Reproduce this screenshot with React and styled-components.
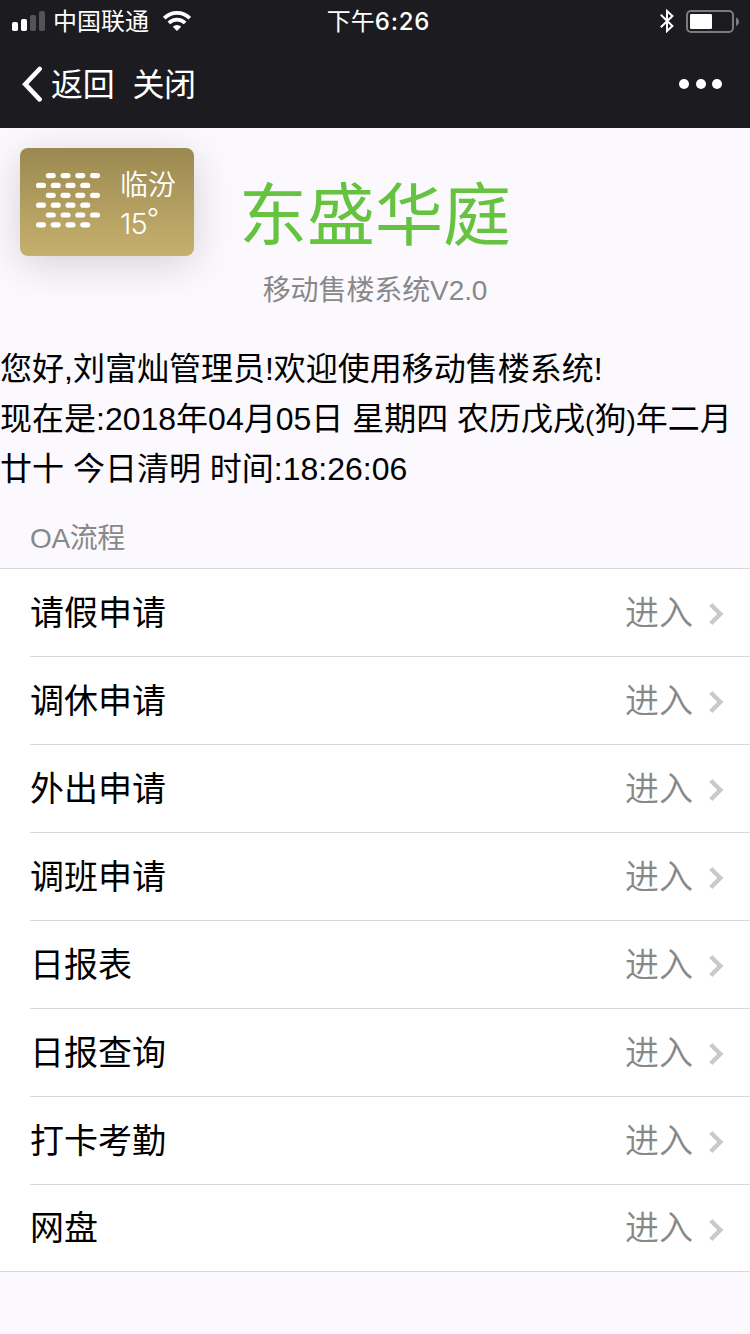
import React from 'react';
import styled, { createGlobalStyle } from 'styled-components';

const GlobalStyle = createGlobalStyle`
  * { box-sizing: border-box; }
  body {
    margin: 0;
    background: #fbf9fe;
    font-family: "Liberation Sans", "Noto Sans CJK SC", sans-serif;
    color: #000;
  }
`;

const Screen = styled.div`
  width: 750px;
  height: 1334px;
  overflow: hidden;
  background: #fbf9fe;
`;

const Header = styled.header`
  height: 128px;
  background: #1c1b20;
  color: #fff;
`;

const StatusBar = styled.div`
  display: grid;
  grid-template-columns: 1fr auto 1fr;
  align-items: center;
  height: 40px;
  padding: 0 11px 0 12px;
`;

const StatusSide = styled.div`
  display: flex;
  align-items: center;
  justify-content: ${({ $end }) => ($end ? 'flex-end' : 'flex-start')};
  gap: ${({ $end }) => ($end ? '12px' : '0')};
  height: 40px;
  svg { display: block; flex: none; }
`;

const Carrier = styled.span`
  margin: 0 14px 2px 7px;
  font: 24px/36px "Noto Sans CJK SC", sans-serif;
`;

const Clock = styled.div`
  display: flex;
  align-items: center;
  margin-left: 6px;
  padding-bottom: 2px;
  font: 24px/36px "Noto Sans CJK SC", sans-serif;
`;

const Digits = styled.span`
  padding-top: 4px;
  font: 500 24px/36px Inter, sans-serif;
  letter-spacing: 0.8px;
`;

const NavBar = styled.nav`
  display: flex;
  align-items: center;
  height: 88px;
  padding: 0 28px 0 21px;
  font: 32px/48px "Noto Sans CJK SC", sans-serif;
  letter-spacing: -0.3px;
  svg { display: block; }
`;

const NavText = styled.span`
  margin: 0 0 4px ${({ $gap }) => $gap}px;
`;

const More = styled.div`
  display: flex;
  gap: 6.5px;
  margin-left: auto;
`;

const Dot = styled.i`
  width: 10px;
  height: 10px;
  border-radius: 50%;
  background: #fff;
`;

const Hero = styled.section`
  position: relative;
  height: 216px;
  padding-top: 33px;
  text-align: center;
`;

const Weather = styled.aside`
  position: absolute;
  left: 20px;
  top: 20px;
  display: flex;
  width: 174px;
  height: 108px;
  padding: 25px 16px 0;
  border-radius: 8px;
  background: linear-gradient(#9b8950, #c6b06e);
  box-shadow: 0 8px 40px rgba(0, 0, 0, 0.16);
  color: #fff;
  text-align: left;
`;

const WeatherText = styled.div`
  margin: -10px 0 0 19px;
  font: 350 28px/40px "Noto Sans CJK SC", sans-serif;
`;

const Temperature = styled.div`
  display: flex;
  padding-top: 1px;
  font: 300 29px/40px Inter, sans-serif;
  letter-spacing: -1px;
`;

const Degree = styled.span`
  margin-top: -5px;
  font-size: 27px;
`;

const Title = styled.h1`
  margin: 0;
  color: #65c33f;
  font: 400 68px/100px "Noto Sans CJK SC", sans-serif;
`;

const Subtitle = styled.p`
  margin: 10px 0 0;
  color: #888;
  font-size: 28px;
  line-height: 40px;
  letter-spacing: -0.1px;
`;

const Greeting = styled.p`
  margin: 0;
  font-size: 32px;
  line-height: 50px;
`;

const Bracket = styled.span`
  font-size: 28px;
  line-height: 1;
`;

const SectionTitle = styled.h2`
  margin: 0;
  height: 74px;
  padding: 25px 30px 0;
  color: #888;
  font-weight: 400;
  font-size: 28px;
  line-height: 40px;
  letter-spacing: -0.4px;
`;

const List = styled.ul`
  margin: 0;
  padding: 0 0 0 30px;
  list-style: none;
  background: #fff;
  border-top: 1px solid #d9d9d9;
  border-bottom: 1px solid #d9d9d9;
`;

const Row = styled.li`
  display: flex;
  align-items: center;
  height: 88px;
  padding-right: 26px;
  border-bottom: 1px solid #d9d9d9;
  font: 34px/48px "Noto Sans CJK SC", sans-serif;
  &:last-child { height: 86px; border-bottom: 0; }
  svg { display: block; margin: 3px 0 0 15px; }
`;

const Label = styled.span`
  flex: 1;
  padding-bottom: 4px;
`;

const Action = styled.span`
  padding-bottom: 4px;
  color: #888;
  font-weight: 350;
`;

const items = ['请假申请', '调休申请', '外出申请', '调班申请', '日报表', '日报查询', '打卡考勤', '网盘'];

const Signal = () => (
  <svg width="34" height="22" viewBox="0 0 34 22" fill="#fff">
    <rect x="0" y="12" width="6" height="9" rx="1.8" />
    <rect x="9" y="9" width="6" height="12" rx="1.8" />
    <rect x="18" y="5" width="6" height="16" rx="1.8" fill="#545357" />
    <rect x="27" y="1" width="6" height="20" rx="1.8" fill="#545357" />
  </svg>
);

const Wifi = () => (
  <svg width="28" height="20" viewBox="0 0 28 20" fill="none" stroke="#fff" strokeWidth="3.8">
    <path d="M1.3 7.2a18 18 0 0 1 25.4 0" />
    <path d="M5.9 12a11.5 11.5 0 0 1 16.2 0" />
    <path d="M14 20l-4.2-4.3a6 6 0 0 1 8.4 0z" fill="#fff" stroke="none" />
  </svg>
);

const Bluetooth = () => (
  <svg width="14" height="24" viewBox="0 0 14 24" fill="none" stroke="#fff" strokeWidth="2">
    <path d="M.8 5.7L12.4 17 7 22V2l5.4 5L.8 18.3" />
  </svg>
);

const Battery = () => (
  <svg width="53" height="24" viewBox="0 0 53 24">
    <rect x="1" y="2" width="46" height="21" rx="4" fill="none" stroke="#7c7b7f" strokeWidth="2" />
    <rect x="4" y="5" width="22" height="15" rx="1.2" fill="#fff" />
    <path d="M50 8.500c4 1.500 4 7 0 8.500z" fill="#7c7b7f" />
  </svg>
);

const BackIcon = () => (
  <svg width="22" height="36" viewBox="0 0 22 36" fill="none" stroke="#fff" strokeWidth="4.6" strokeLinecap="round" strokeLinejoin="miter">
    <path d="M18.600 3L4.200 18.200 18.600 33.400" />
  </svg>
);

const Haze = () => (
  <svg width="65" height="56" viewBox="0 0 65 56" fill="#fff">
    {[0, 1, 2, 3, 4, 5].map((r) =>
      [0, 1, 2, 3].map((c) => (
        <rect key={`${r}-${c}`} x={(r % 2 ? 0 : 9.8) + c * 14.75} y={r * 9.85} width="10" height="5.2" rx="2.6" />
      ))
    )}
  </svg>
);

const Chevron = () => (
  <svg width="16" height="24" viewBox="0 0 16 24" fill="none" stroke="#c8c8cd" strokeWidth="4.4">
    <path d="M2.800 2.500L12.300 12l-9.500 9.500" />
  </svg>
);

export default function App() {
  return (
    <Screen>
      <GlobalStyle />
      <Header>
        <StatusBar>
          <StatusSide>
            <Signal />
            <Carrier>中国联通</Carrier>
            <Wifi />
          </StatusSide>
          <Clock>下午<Digits>6:26</Digits></Clock>
          <StatusSide $end>
            <Bluetooth />
            <Battery />
          </StatusSide>
        </StatusBar>
        <NavBar>
          <BackIcon />
          <NavText $gap={8}>返回</NavText>
          <NavText $gap={18}>关闭</NavText>
          <More><Dot /><Dot /><Dot /></More>
        </NavBar>
      </Header>
      <Hero>
        <Weather>
          <Haze />
          <WeatherText>
            临汾
            <Temperature>15<Degree>°</Degree></Temperature>
          </WeatherText>
        </Weather>
        <Title>东盛华庭</Title>
        <Subtitle>移动售楼系统V2.0</Subtitle>
      </Hero>
      <Greeting>
        您好,刘富灿管理员!欢迎使用移动售楼系统!
        <br />
        现在是:2018年04月05日 星期四 农历戊戌<Bracket>(</Bracket>狗<Bracket>)</Bracket>年二月廿十 今日清明 时间:18:26:06
      </Greeting>
      <SectionTitle>OA流程</SectionTitle>
      <List>
        {items.map((item) => (
          <Row key={item}>
            <Label>{item}</Label>
            <Action>进入</Action>
            <Chevron />
          </Row>
        ))}
      </List>
    </Screen>
  );
}
